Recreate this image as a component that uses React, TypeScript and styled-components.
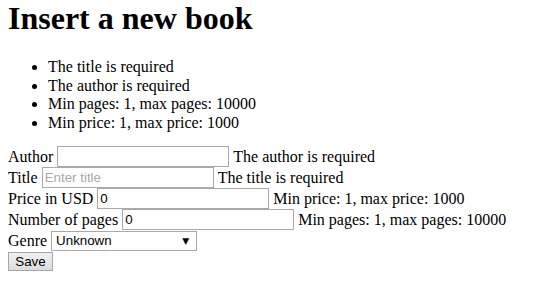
import React from 'react';
import styled, {createGlobalStyle} from 'styled-components';

const GlobalStyle = createGlobalStyle`
  body {
    margin: 0 8px;
    font-family: "Liberation Serif", "Times New Roman", serif;
    font-size: 16px;
    color: #000;
    background: #fff;
  }
`

const Title = styled.h1`
  font-size: 32px;
  font-weight: bold;
  margin: 0 0 21.44px;
`

const ErrorList = styled.ul`
  margin: 16px 0 14px;
  padding-left: 40px;
  line-height: 18.4px;
`

const Form = styled.form`
  display: flex;
  flex-direction: column;
  align-items: flex-start;
`

const Row = styled.div<{h?: number}>`
  display: flex;
  align-items: center;
  gap: 4px;
  height: ${(p) => p.h || 21}px;
`

const TextInput = styled.input<{w: number}>`
  box-sizing: border-box;
  width: ${(p) => p.w}px;
  height: 21px;
  margin: 0;
  padding: 1px 2px;
  border: 1px solid #a9a9a9;
  font-family: "Liberation Sans", Arial, sans-serif;
  font-size: 13.33px;
  color: #000;
  background: #fff;
  outline: none;
  &::placeholder {
    color: #a9a9a9;
  }
`

const SelectWrap = styled.span`
  position: relative;
  display: inline-block;
  height: 20px;
`

const Select = styled.select`
  appearance: none;
  box-sizing: border-box;
  width: 146px;
  height: 20px;
  margin: 0;
  padding: 0 4px;
  border: 1px solid #a9a9a9;
  background: #fff;
  font-family: "Liberation Sans", Arial, sans-serif;
  font-size: 13.33px;
  color: #000;
  border-radius: 0;
`

const Arrow = styled.span`
  position: absolute;
  right: 8px;
  top: 4px;
  font-size: 9px;
  line-height: 12px;
  pointer-events: none;
  font-family: "DejaVu Sans", sans-serif;
`

const Button = styled.button`
  box-sizing: border-box;
  height: 19px;
  width: 45px;
  margin: 0;
  padding: 0;
  border: 1px solid #a6a6a6;
  background: linear-gradient(#f0f0f0, #dcdcdc);
  font-family: "Liberation Sans", Arial, sans-serif;
  font-size: 13.33px;
  color: #000;
`

const App = () => {
    return (
        <>
            <GlobalStyle/>
            <Title>Insert a new book</Title>
            <ErrorList>
                <li>The title is required</li>
                <li>The author is required</li>
                <li>Min pages: 1, max pages: 10000</li>
                <li>Min price: 1, max price: 1000</li>
            </ErrorList>
            <Form onSubmit={(e) => e.preventDefault()}>
                <Row>
                    <label>Author</label>
                    <TextInput w={172}/>
                    <span>The author is required</span>
                </Row>
                <Row>
                    <label>Title</label>
                    <TextInput w={172} placeholder="Enter title"/>
                    <span>The title is required</span>
                </Row>
                <Row>
                    <label>Price in USD</label>
                    <TextInput w={172} defaultValue="0"/>
                    <span>Min price: 1, max price: 1000</span>
                </Row>
                <Row>
                    <label>Number of pages</label>
                    <TextInput w={172} defaultValue="0"/>
                    <span>Min pages: 1, max pages: 10000</span>
                </Row>
                <Row>
                    <label>Genre</label>
                    <SelectWrap>
                        <Select defaultValue="Unknown">
                            <option>Unknown</option>
                        </Select>
                        <Arrow>▼</Arrow>
                    </SelectWrap>
                </Row>
                <Row h={20}>
                    <Button type="submit">Save</Button>
                </Row>
            </Form>
        </>
    )
}

export default App;
